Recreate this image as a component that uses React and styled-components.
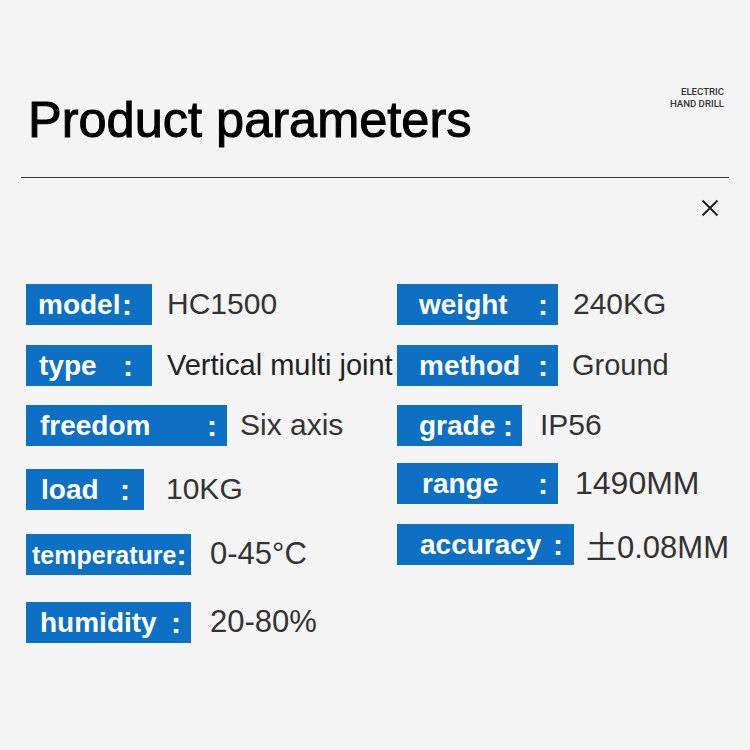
import React from 'react'
import styled, { createGlobalStyle } from 'styled-components'

const GlobalStyle = createGlobalStyle`
  body {
    margin: 0;
    background: #f4f4f4;
    font-family: "Liberation Sans", Arial, sans-serif;
  }
`

const Page = styled.div`
  width: 750px;
  height: 750px;
  background: #f4f4f4;
  overflow: hidden;
`

const Header = styled.header`
  display: flex;
  justify-content: space-between;
  align-items: flex-start;
  padding: 86px 26px 0 28px;
`

const Title = styled.h1`
  margin: 9px 0 0;
  font-family: "Liberation Sans", Arial, sans-serif;
  font-weight: 400;
  font-size: 50.5px;
  line-height: 1;
  color: #000;
  -webkit-text-stroke: 1px #000;
`

const Tag = styled.div`
  font-family: Roboto, "Liberation Sans", sans-serif;
  font-weight: 500;
  font-size: 9.6px;
  line-height: 12px;
  text-align: right;
  color: #333;
`

const Rule = styled.hr`
  margin: 31px 21px 0;
  border: 0;
  height: 1px;
  background: #3a3a3a;
`

const CloseRow = styled.div`
  display: flex;
  justify-content: flex-end;
  padding: 21px 31px 0 0;
`

const Close = styled.button`
  width: 18px;
  height: 18px;
  padding: 0;
  border: 0;
  background: none;
  color: #222;
  svg { display: block; }
`

const Columns = styled.div`
  display: flex;
  padding: 67px 0 0 26px;
`

const Column = styled.div`
  display: flex;
  flex-direction: column;
  width: ${p => p.$width}px;
`

const Row = styled.div`
  display: flex;
  align-items: center;
  margin-top: ${p => p.$top}px;
  white-space: nowrap;
`

const Label = styled.div`
  display: flex;
  flex-shrink: 0;
  align-items: center;
  justify-content: space-between;
  box-sizing: border-box;
  width: ${p => p.$width}px;
  height: 41px;
  padding: 2px ${p => p.$right}px 0 ${p => p.$left}px;
  background: #0d70c5;
  color: #fff;
  font-family: "Liberation Sans", Arial, sans-serif;
  font-weight: 700;
  font-size: ${p => p.$size || 28}px;
`

const Colon = styled.span`
  font-size: 30px;
`

const Value = styled.div`
  margin-left: ${p => p.$gap}px;
  font-family: "Liberation Sans", "Noto Sans CJK SC", sans-serif;
  font-size: ${p => p.$size || 30}px;
  color: ${p => p.$dark ? '#222' : '#333'};
`

const left = [
  { name: 'model', width: 126, l: 12, r: 20, top: 0, gap: 15, value: 'HC1500' },
  { name: 'type', width: 126, l: 13, r: 19, top: 20, gap: 15, value: 'Vertical multi joint', size: 29, dark: true },
  { name: 'freedom', width: 201, l: 14, r: 10, top: 19, gap: 13, value: 'Six axis' },
  { name: 'load', width: 118, l: 15, r: 14, top: 23, gap: 22, value: '10KG' },
  { name: 'temperature', width: 165, l: 6, r: 7, top: 24, gap: 19, value: '0-45°C', labelSize: 25, size: 31 },
  { name: 'humidity', width: 165, l: 14, r: 10, top: 27, gap: 19, value: '20-80%', size: 31 },
]

const right = [
  { name: 'weight', width: 161, l: 22, r: 10, top: 0, gap: 15, value: '240KG' },
  { name: 'method', width: 161, l: 22, r: 10, top: 20, gap: 14, value: 'Ground', size: 29 },
  { name: 'grade', width: 125, l: 22, r: 9, top: 19, gap: 18, value: 'IP56' },
  { name: 'range', width: 161, l: 25, r: 10, top: 17, gap: 17, value: '1490MM', size: 32 },
  { name: 'accuracy', width: 177, l: 23, r: 11, top: 18, gap: 12, value: '土0.08MM', size: 31 },
]

const ParamRow = ({ item }) => (
  <Row $top={item.top}>
    <Label $width={item.width} $left={item.l} $right={item.r} $size={item.labelSize}>
      <span>{item.name}</span>
      <Colon>:</Colon>
    </Label>
    <Value $gap={item.gap} $size={item.size} $dark={item.dark}>{item.value}</Value>
  </Row>
)

const App = () => {
  return (
    <Page>
      <GlobalStyle />
      <Header>
        <Title>Product parameters</Title>
        <Tag>ELECTRIC<br />HAND DRILL</Tag>
      </Header>
      <Rule />
      <CloseRow>
        <Close aria-label="close">
          <svg width="18" height="18" viewBox="0 0 18 18">
            <path d="M1.5 1.5 L16.5 16.5 M16.5 1.5 L1.5 16.5" stroke="currentColor" strokeWidth="2" fill="none" />
          </svg>
        </Close>
      </CloseRow>
      <Columns>
        <Column $width={371}>
          {left.map(item => <ParamRow key={item.name} item={item} />)}
        </Column>
        <Column $width={353}>
          {right.map(item => <ParamRow key={item.name} item={item} />)}
        </Column>
      </Columns>
    </Page>
  )
}

export default App
